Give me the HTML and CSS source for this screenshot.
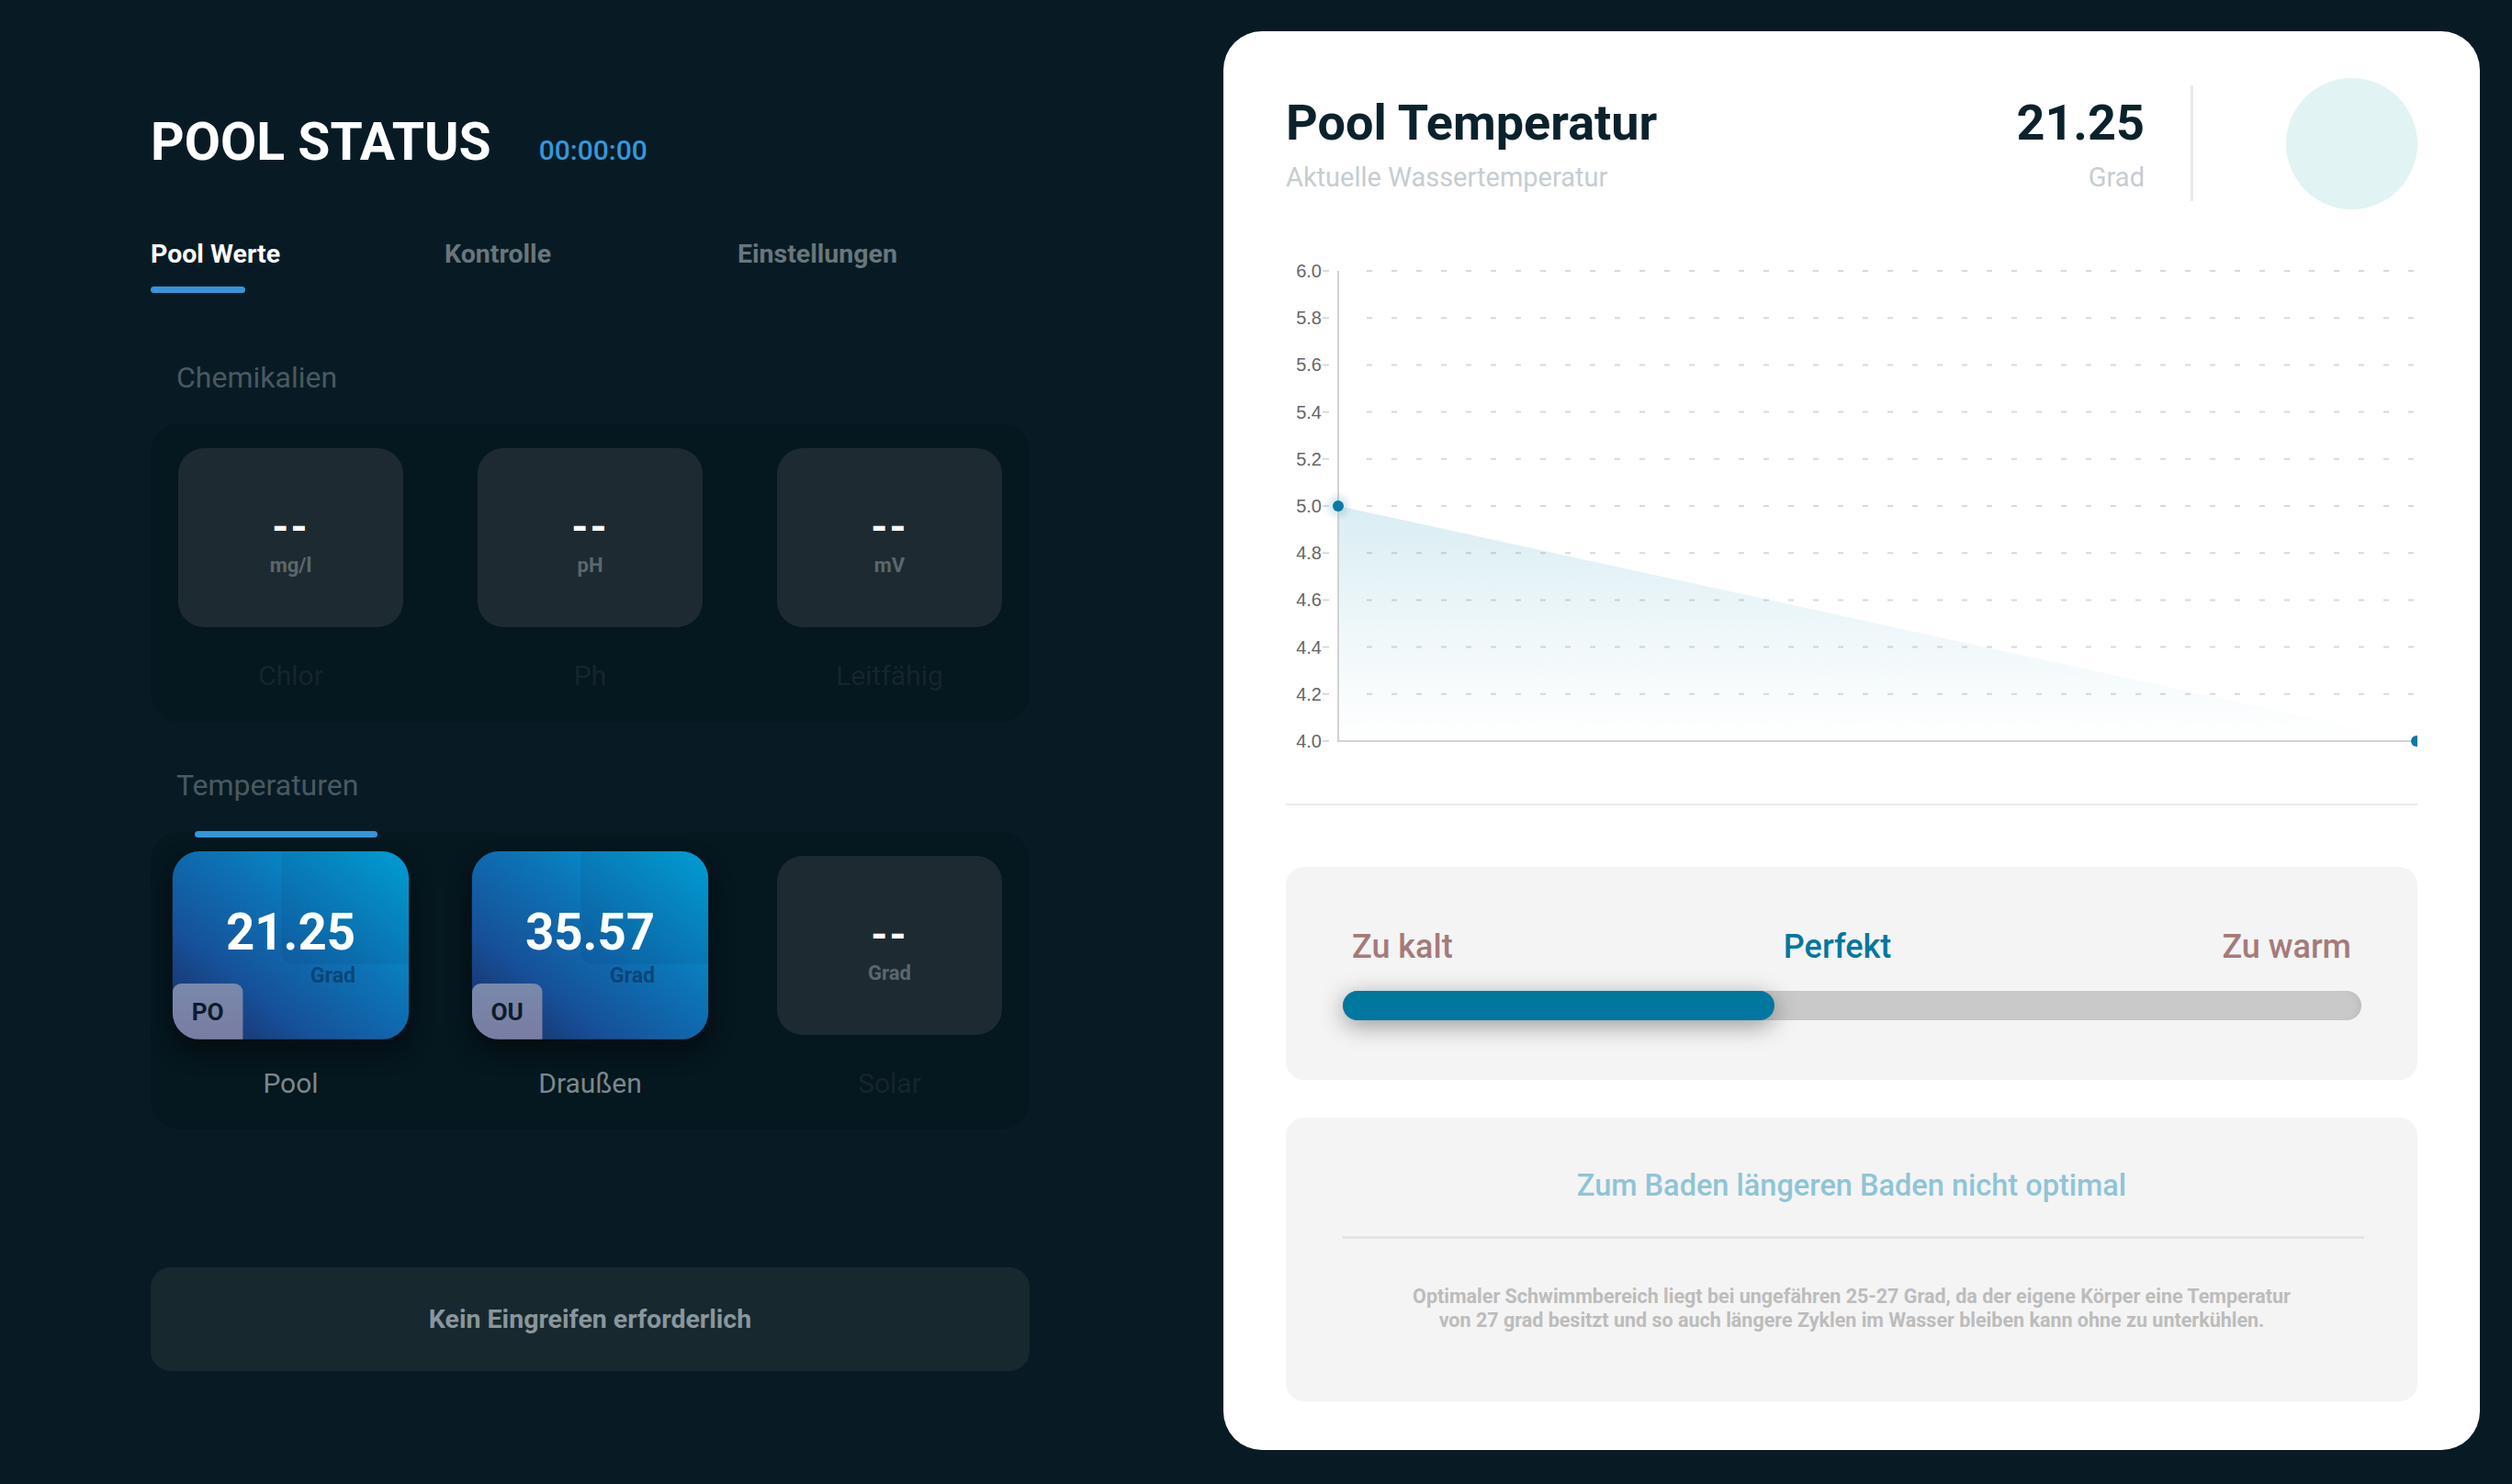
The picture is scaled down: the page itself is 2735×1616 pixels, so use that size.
FILE: index.html
```html
<!DOCTYPE html>
<html lang="de">
<head>
<meta charset="utf-8">
<title>Pool Status</title>
<link rel="stylesheet" href="styles.css">
</head>
<body>
<div class="page">
  <section class="left">
    <header class="status-head">
      <h1 class="status-title">POOL STATUS</h1>
      <span class="clock">00:00:00</span>
    </header>
    <nav class="tabs">
      <div class="tab active">Pool Werte</div>
      <div class="tab">Kontrolle</div>
      <div class="tab">Einstellungen</div>
    </nav>

    <h2 class="section-title">Chemikalien</h2>
    <div class="group">
      <div class="tile">
        <div class="card"><div class="val"><span class="num">--</span><span class="unit">mg/l</span></div></div>
        <div class="label dim">Chlor</div>
      </div>
      <div class="tile">
        <div class="card"><div class="val"><span class="num">--</span><span class="unit">pH</span></div></div>
        <div class="label dim">Ph</div>
      </div>
      <div class="tile">
        <div class="card"><div class="val"><span class="num">--</span><span class="unit">mV</span></div></div>
        <div class="label dim">Leitfähig</div>
      </div>
    </div>

    <h2 class="section-title second">Temperaturen</h2>
    <div class="title-bar"></div>
    <div class="group">
      <div class="tile">
        <div class="card blue">
          <div class="shade"></div>
          <div class="val right"><span class="num big">21.25</span><span class="unit">Grad</span></div>
          <div class="badge">PO</div>
        </div>
        <div class="label">Pool</div>
      </div>
      <div class="tile">
        <div class="card blue">
          <div class="shade"></div>
          <div class="val right"><span class="num big">35.57</span><span class="unit">Grad</span></div>
          <div class="badge">OU</div>
        </div>
        <div class="label">Draußen</div>
      </div>
      <div class="tile">
        <div class="card"><div class="val"><span class="num">--</span><span class="unit">Grad</span></div></div>
        <div class="label dim">Solar</div>
      </div>
    </div>

    <div class="action">Kein Eingreifen erforderlich</div>
  </section>

  <section class="detail">
    <header class="detail-head">
      <div class="head-text">
        <div class="head-title">Pool Temperatur</div>
        <div class="head-sub">Aktuelle Wassertemperatur</div>
      </div>
      <div class="head-value">
        <div class="head-title">21.25</div>
        <div class="head-sub">Grad</div>
      </div>
      <div class="vline"></div>
      <div class="circle"></div>
    </header>

    <div class="chart">
      <svg width="1232" height="560" viewBox="0 0 1232 560">
        <defs>
          <linearGradient id="area" x1="0" y1="0" x2="0" y2="1">
            <stop offset="0" stop-color="#1f97b9" stop-opacity="0.17"/>
            <stop offset="0.55" stop-color="#1f97b9" stop-opacity="0.07"/>
            <stop offset="1" stop-color="#1f97b9" stop-opacity="0"/>
          </linearGradient>
          <radialGradient id="glow">
            <stop offset="0" stop-color="#0a7aa5" stop-opacity="0.25"/>
            <stop offset="1" stop-color="#0a7aa5" stop-opacity="0"/>
          </radialGradient>
        </defs>
        <g class="grid">
          <line x1="88" y1="25" x2="1232" y2="25"/>
          <line x1="88" y1="76.2" x2="1232" y2="76.2"/>
          <line x1="88" y1="127.4" x2="1232" y2="127.4"/>
          <line x1="88" y1="178.6" x2="1232" y2="178.6"/>
          <line x1="88" y1="229.8" x2="1232" y2="229.8"/>
          <line x1="88" y1="281" x2="1232" y2="281"/>
          <line x1="88" y1="332.2" x2="1232" y2="332.2"/>
          <line x1="88" y1="383.4" x2="1232" y2="383.4"/>
          <line x1="88" y1="434.6" x2="1232" y2="434.6"/>
          <line x1="88" y1="485.8" x2="1232" y2="485.8"/>
        </g>
        <g class="ticks">
          <line x1="40" y1="25" x2="47" y2="25"/>
          <line x1="40" y1="76.2" x2="47" y2="76.2"/>
          <line x1="40" y1="127.4" x2="47" y2="127.4"/>
          <line x1="40" y1="178.6" x2="47" y2="178.6"/>
          <line x1="40" y1="229.8" x2="47" y2="229.8"/>
          <line x1="40" y1="281" x2="47" y2="281"/>
          <line x1="40" y1="332.2" x2="47" y2="332.2"/>
          <line x1="40" y1="383.4" x2="47" y2="383.4"/>
          <line x1="40" y1="434.6" x2="47" y2="434.6"/>
          <line x1="40" y1="485.8" x2="47" y2="485.8"/>
          <line x1="40" y1="537" x2="47" y2="537"/>
        </g>
        <g class="ylabels">
          <text x="39" y="25">6.0</text>
          <text x="39" y="76.2">5.8</text>
          <text x="39" y="127.4">5.6</text>
          <text x="39" y="178.6">5.4</text>
          <text x="39" y="229.8">5.2</text>
          <text x="39" y="281">5.0</text>
          <text x="39" y="332.2">4.8</text>
          <text x="39" y="383.4">4.6</text>
          <text x="39" y="434.6">4.4</text>
          <text x="39" y="485.8">4.2</text>
          <text x="39" y="537">4.0</text>
        </g>
        <polygon points="57,281 1231,537 57,537" fill="url(#area)"/>
        <line class="axis" x1="57" y1="25" x2="57" y2="538"/>
        <line class="axis" x1="56" y1="537" x2="1232" y2="537"/>
        <circle cx="57" cy="281" r="16" fill="url(#glow)"/>
        <circle cx="57" cy="281" r="6" fill="#0a7aa5"/>
        <circle cx="1231" cy="537" r="6" fill="#0a7aa5"/>
      </svg>
    </div>

    <div class="gauge">
      <div class="gauge-labels">
        <span class="warn">Zu kalt</span>
        <span class="ok">Perfekt</span>
        <span class="warn">Zu warm</span>
      </div>
      <div class="bar"><div class="bar-fill" style="width:42.4%"></div></div>
    </div>

    <div class="info">
      <h3 class="info-title">Zum Baden längeren Baden nicht optimal</h3>
      <div class="info-rule"></div>
      <p class="info-text">Optimaler Schwimmbereich liegt bei ungefähren 25-27 Grad, da der eigene Körper eine Temperatur<br>von 27 grad besitzt und so auch längere Zyklen im Wasser bleiben kann ohne zu unterkühlen.</p>
    </div>
  </section>
</div>
</body>
</html>
```

FILE: styles.css
```css
html, body {
  margin: 0;
  padding: 0;
}
body {
  background: #081b25;
  font-family: Roboto, "Noto Sans", "Liberation Sans", sans-serif;
  width: 2735px;
  height: 1616px;
  overflow: hidden;
}
.page {
  display: flex;
  align-items: flex-start;
}

/* ---------- left column ---------- */
.left {
  width: 957px;
  margin-left: 164px;
  padding-top: 122px;
}
.status-head {
  display: flex;
  align-items: baseline;
}
.status-title {
  margin: 0;
  font-size: 57px;
  line-height: 66px;
  font-weight: 700;
  color: #ffffff;
}
.clock {
  margin-left: 52px;
  font-size: 30px;
  font-weight: 500;
  color: #3597db;
}
.tabs {
  display: grid;
  grid-template-columns: 320px 319px 318px;
  margin-top: 69px;
  align-items: start;
}
.tab {
  font-size: 28.5px;
  line-height: 40px;
  font-weight: 700;
  color: #69767c;
}
.tab.active {
  color: #ffffff;
}
.tab.active::after {
  content: "";
  display: block;
  width: 103px;
  height: 7px;
  border-radius: 4px;
  background: #3496dc;
  margin-top: 15px;
}
.section-title {
  margin: 72px 0 30px 28px;
  font-size: 32px;
  line-height: 40px;
  font-weight: 400;
  color: #4a5960;
}
.section-title.second {
  margin: 49px 0 0 28px;
}
.title-bar {
  position: relative;
  z-index: 1;
  width: 199px;
  height: 7px;
  border-radius: 4px;
  background: #3496dc;
  margin: 30px 0 -6px 48px;
}
.group {
  background: #05171f;
  border-radius: 32px;
  padding: 27px 30px 30px;
  display: grid;
  grid-template-columns: repeat(3, 245px);
  column-gap: 81px;
}
.title-bar + .group {
  padding-top: 26px;
}
.tile {
  display: flex;
  flex-direction: column;
}
.card {
  position: relative;
  height: 195px;
  box-sizing: border-box;
  padding-top: 8px;
  border-radius: 28px;
  background: #1e2a31;
  display: flex;
  align-items: center;
  justify-content: center;
  overflow: hidden;
}
.card.blue {
  padding-top: 4px;
  background: linear-gradient(to top right, #1c2559 0%, #16519a 30%, #0c74b6 60%, #02a9df 100%);
  transform: scale(1.05);
  box-shadow: 0 12px 24px rgba(0, 0, 0, 0.45);
}
.shade {
  position: absolute;
  top: 0;
  right: 0;
  width: 54%;
  height: 60%;
  border-bottom-left-radius: 12px;
  background: rgba(0, 30, 70, 0.08);
}
.val {
  position: relative;
  display: flex;
  flex-direction: column;
  align-items: center;
}
.val.right {
  align-items: flex-end;
}
.num {
  font-size: 46px;
  line-height: 44px;
  font-weight: 700;
  color: #ffffff;
  letter-spacing: 2px;
}
.num.big {
  font-size: 52px;
  line-height: 52px;
  letter-spacing: 0;
}
.unit {
  margin-top: 8px;
  font-size: 22px;
  line-height: 24px;
  font-weight: 700;
  color: #5b676d;
}
.blue .unit {
  margin-top: 6px;
  color: rgba(10, 45, 85, 0.62);
}
.badge {
  position: absolute;
  left: 0;
  bottom: 0;
  width: 73px;
  height: 58px;
  border-radius: 9px 9px 0 0;
  background: linear-gradient(#7889ab, #7a7ca2);
  display: flex;
  align-items: center;
  justify-content: center;
  font-size: 25px;
  font-weight: 700;
  color: #0d1b2b;
}
.label {
  margin-top: 33px;
  font-size: 30px;
  line-height: 40px;
  text-align: center;
  color: #7c888e;
}
.label.dim {
  color: #15252d;
}
.action {
  margin-top: 150px;
  height: 113px;
  border-radius: 22px;
  background: #17282f;
  display: flex;
  align-items: center;
  justify-content: center;
  font-size: 28.5px;
  font-weight: 700;
  color: #8a969b;
}

/* ---------- right card ---------- */
.detail {
  margin-left: 211px;
  margin-top: 34px;
  width: 1368px;
  height: 1545px;
  box-sizing: border-box;
  padding: 50px 68px 0;
  background: #ffffff;
  border-radius: 42px;
}
.detail-head {
  display: flex;
  align-items: center;
  height: 144px;
}
.head-text {
  flex: 1;
}
.head-title {
  font-size: 54px;
  line-height: 64px;
  font-weight: 700;
  color: #0b222c;
}
.head-sub {
  margin-top: 10px;
  font-size: 29px;
  line-height: 34px;
  color: #c5cdd1;
}
.head-value {
  text-align: right;
}
.vline {
  width: 3px;
  height: 126px;
  background: #e6e8e9;
  margin: 0 101px 0 50px;
}
.circle {
  width: 143px;
  height: 143px;
  border-radius: 50%;
  background: #e1f3f3;
}
.chart {
  padding: 42px 0 45px;
  border-bottom: 2px solid #e9ebec;
}
.chart svg {
  display: block;
}
.grid line {
  stroke: #d9d9d9;
  stroke-width: 2;
  stroke-dasharray: 6 21;
}
.ticks line {
  stroke: #cfcfcf;
  stroke-width: 1.5;
}
.ylabels text {
  font-family: "Liberation Sans", Arial, sans-serif;
  font-size: 20px;
  fill: #666666;
  text-anchor: end;
  dominant-baseline: central;
}
.axis {
  stroke: #d2d2d2;
  stroke-width: 2;
}
.gauge {
  margin-top: 67px;
  background: #f4f4f4;
  border-radius: 20px;
  padding: 66px 61px 65px 62px;
}
.gauge-labels {
  display: flex;
  justify-content: space-between;
  padding: 0 11px 0 10px;
  font-size: 36px;
  line-height: 42px;
  font-weight: 500;
}
.warn {
  color: #a47b79;
}
.ok {
  color: #00779e;
}
.bar {
  margin-top: 27px;
  height: 32px;
  border-radius: 16px;
  background: #c9c9c9;
  box-shadow: inset -8px 0 8px -6px rgba(0, 0, 0, 0.08);
}
.bar-fill {
  height: 100%;
  border-radius: 16px;
  background: #00779e;
  box-shadow: 0 6px 26px rgba(0, 0, 0, 0.38);
}
.info {
  margin-top: 41px;
  background: #f4f4f4;
  border-radius: 20px;
  padding: 56px 0 75px;
  text-align: center;
}
.info-title {
  margin: 0;
  font-size: 32.5px;
  line-height: 36px;
  font-weight: 500;
  color: #8fc4d6;
}
.info-rule {
  height: 3px;
  background: #e4e4e4;
  margin: 37px 58px 0 62px;
}
.info-text {
  margin: 50px 0 0;
  font-size: 21.5px;
  line-height: 26px;
  font-weight: 700;
  color: #bcbcbc;
}
```
